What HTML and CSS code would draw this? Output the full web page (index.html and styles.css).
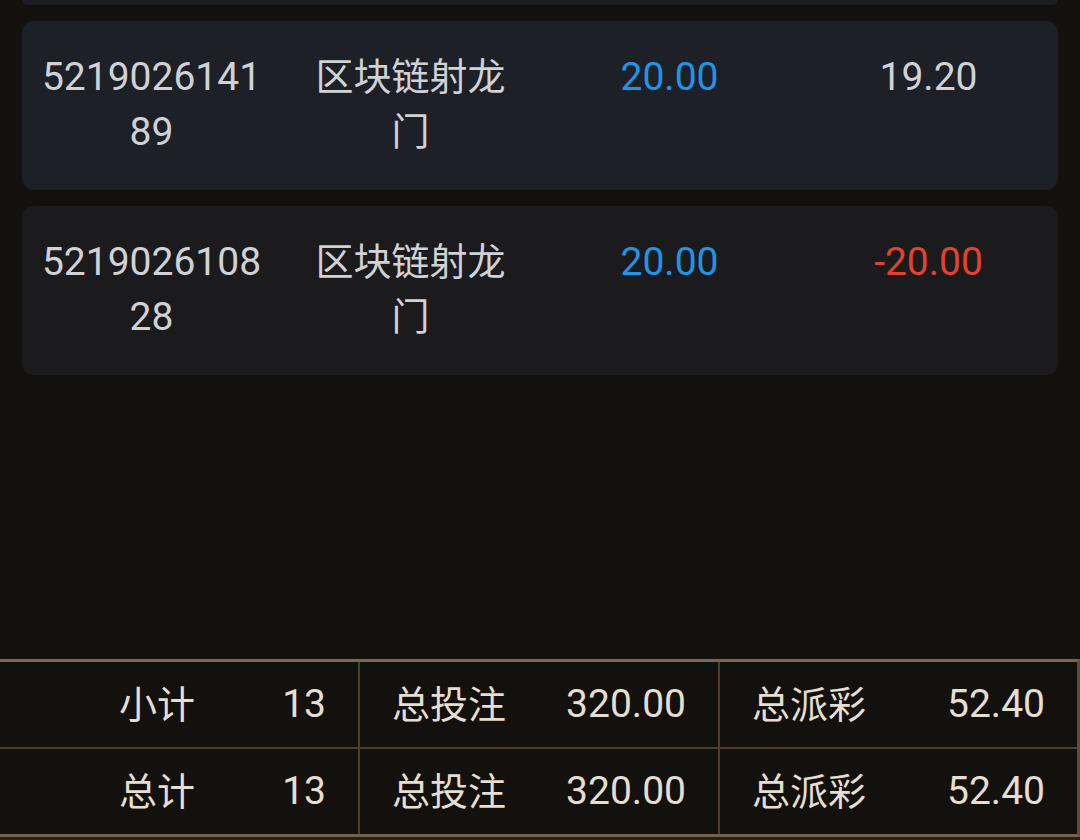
FILE: index.html
```html
<!DOCTYPE html>
<html lang="zh-CN">
<head>
<meta charset="utf-8">
<title>投注记录</title>
<link rel="stylesheet" href="styles.css">
</head>
<body>
<div class="page">
  <div class="list">
    <div class="card card-stub"></div>
    <div class="card card-alt">
      <div class="cell num">521902614189</div>
      <div class="cell">区块链射龙门</div>
      <div class="cell num blue">20.00</div>
      <div class="cell num">19.20</div>
    </div>
    <div class="card">
      <div class="cell num">521902610828</div>
      <div class="cell">区块链射龙门</div>
      <div class="cell num blue">20.00</div>
      <div class="cell num red">-20.00</div>
    </div>
  </div>
  <div class="spacer"></div>
  <div class="summary">
    <div class="srow">
      <div class="group first"><span class="label">小计</span><span class="value num">13</span></div>
      <div class="group"><span class="label">总投注</span><span class="value num">320.00</span></div>
      <div class="group"><span class="label">总派彩</span><span class="value num">52.40</span></div>
    </div>
    <div class="srow last">
      <div class="group first"><span class="label">总计</span><span class="value num">13</span></div>
      <div class="group"><span class="label">总投注</span><span class="value num">320.00</span></div>
      <div class="group"><span class="label">总派彩</span><span class="value num">52.40</span></div>
    </div>
  </div>
</div>
</body>
</html>
```

FILE: styles.css
```css
html, body {
  margin: 0;
  padding: 0;
  background: #13110e;
}

body {
  font-family: Roboto, "Noto Sans CJK SC", sans-serif;
  font-size: 38px;
  color: #d0d2d6;
}

.page {
  height: 840px;
  display: flex;
  flex-direction: column;
  overflow: hidden;
}

.list {
  padding: 0 22px;
  display: flex;
  flex-direction: column;
  gap: 16px;
}

.card {
  background: #1b1b1e;
  border-radius: 12px;
  display: grid;
  grid-template-columns: repeat(4, 1fr);
  padding: 29px 0 30px;
}

.card-alt {
  background: #1e2028;
}

.card-stub {
  height: 5px;
  padding: 0;
  border-radius: 0 0 12px 12px;
  background: #1c1d21;
}

.cell {
  padding: 0 18px;
  text-align: center;
  line-height: 55px;
  word-break: break-all;
}

.num {
  font-size: 39px;
}

.blue { color: #2194e4; }
.red { color: #e2432f; }

.spacer { flex: 1; }

.summary {
  border-top: 3px solid #7a6a4d;
  border-bottom: 3px solid #74654a;
  border-right: 3px solid #5c4d37;
  margin-bottom: 3px;
  box-shadow: 0 3px 0 #2a2016;
  color: #e6ded0;
}

.srow {
  display: grid;
  grid-template-columns: 358px 360px 1fr;
  height: 85px;
  border-bottom: 2px solid #4a3e2c;
}

.srow.last {
  border-bottom: 0;
}

.group {
  display: flex;
  align-items: center;
  justify-content: space-between;
  padding: 0 32px;
  border-left: 2px solid #4a3e2c;
}

.group.first {
  border-left: 0;
  padding-left: 119px;
}

.label, .value {
  line-height: 1;
  white-space: nowrap;
}
```
